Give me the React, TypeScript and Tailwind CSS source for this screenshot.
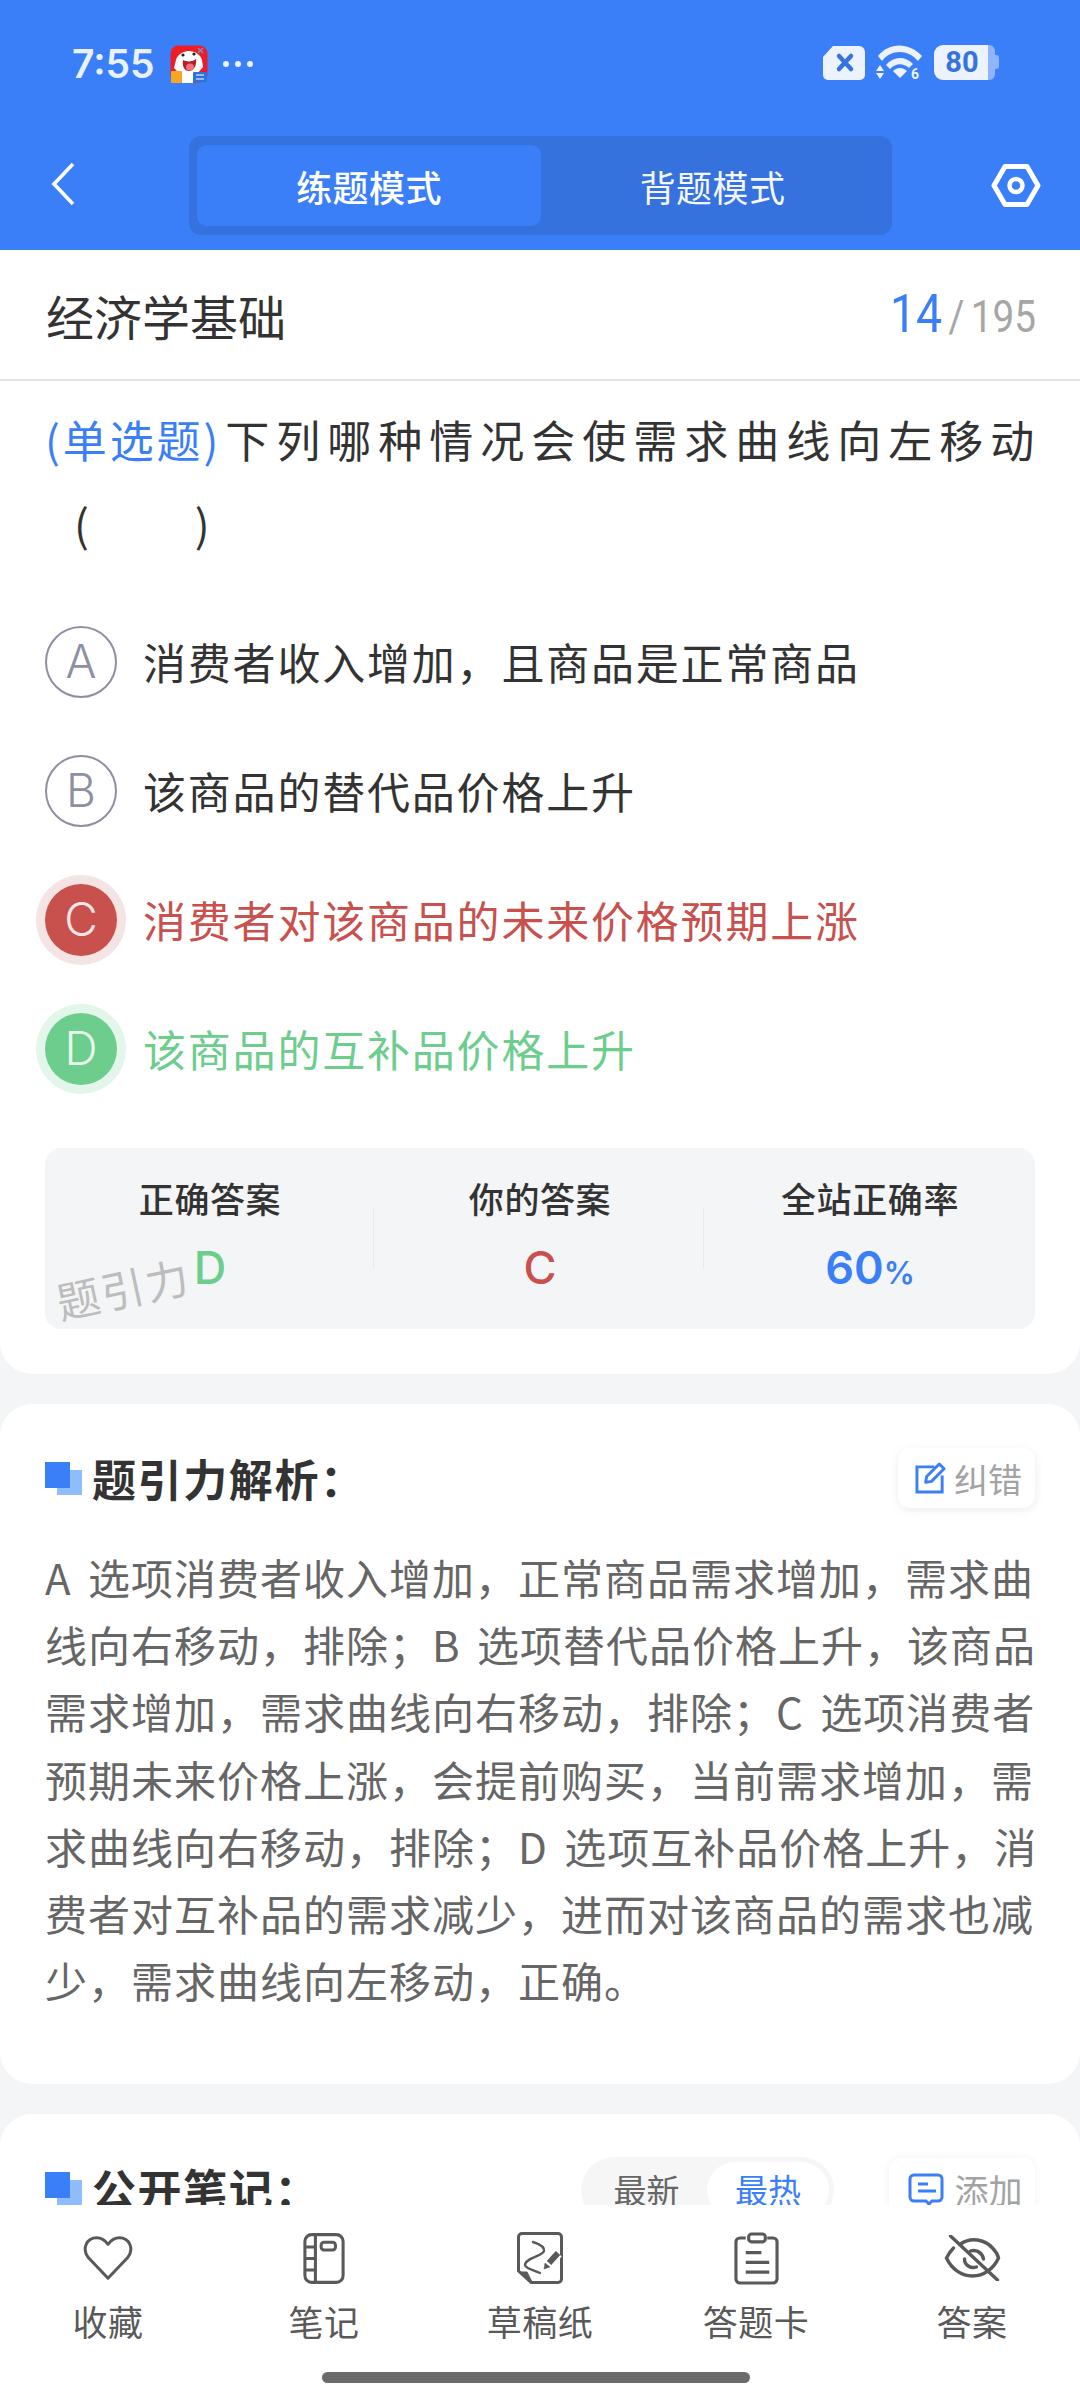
const cjk = "[font-family:'Noto_Sans_CJK_SC','Noto_Sans',sans-serif]";

function Squares() {
  return (
    <span className="relative block w-[37px] h-[33px] shrink-0">
      <span className="absolute right-0 bottom-0 w-[25px] h-[25px] bg-[#8fbcfb]" />
      <span className="absolute left-0 top-0 w-[25px] h-[26px] bg-[#3b7ff8]" />
    </span>
  );
}

function AppIcon() {
  return (
    <svg width="38" height="38" viewBox="0 0 38 38">
      <rect x="0.5" y="0.5" width="37" height="37" rx="8" fill="#ee1c25" />
      <path d="M6 15c1-5 7-9 13-9s12 4 13 9l1 7-6 7H10l-6-6z" fill="#fff" />
      <path d="M13 15c3 2 10 2 13-1 1 6-2 12-7 12s-7-5-6-11z" fill="#b3202a" />
      <ellipse cx="20" cy="22" rx="4" ry="3.5" fill="#f36f7a" />
      <circle cx="13" cy="10" r="1.6" fill="#222" />
      <circle cx="24" cy="9" r="1.6" fill="#222" />
      <path d="M28 3l5 5M33 3l-5 5" stroke="#7b90c4" strokeWidth="1.5" />
      <rect x="1" y="26" width="11" height="12" rx="1" fill="#f6a623" />
      <rect x="12" y="28" width="11" height="10" fill="#fff" />
      <rect x="23" y="27" width="14" height="10" rx="1" fill="#2d72d8" />
      <path d="M26 30h8M26 34h8" stroke="#fff" strokeWidth="1.2" />
    </svg>
  );
}

function StatusRight() {
  return (
    <div className="flex items-center gap-[10px]">
      <svg width="44" height="36" viewBox="0 0 44 36">
        <path d="M11 1h26a6 6 0 0 1 6 6v23a5 5 0 0 1-5 5H6a5 5 0 0 1-5-5V12z" fill="#edf3fe" />
        <path d="M17 11l12 13M29 11L17 24" stroke="#3573e0" strokeWidth="4.5" strokeLinecap="round" />
      </svg>
      <svg width="48" height="37" viewBox="0 0 48 37" fill="#edf3fe">
        <path d="M2 12C13 -2 33 -2 46 12l-4 5C32 5 15 5 6 17z" />
        <path d="M10 21c8-9 19-9 27-1l-4 4c-6-5-13-5-19 1z" />
        <path d="M17 27c4-4 10-4 14 0l-7 7z" />
        <path d="M4 21l4 6H0z" />
        <path d="M0 29h8l-4 6z" />
        <text x="35" y="35" fontSize="14" fontWeight="700" fontFamily="Roboto, sans-serif">6</text>
      </svg>
      <div className="relative flex h-[35px] w-[65px]">
        <div className="flex h-[35px] w-[54px] items-center justify-center rounded-l-[9px] bg-[#edf3fe]">
          <span className="pl-[2px] text-[29px] font-bold leading-[35px] text-[#3573e0] [font-family:Roboto,sans-serif]">80</span>
        </div>
        <div className="h-[35px] w-[7px] rounded-r-[6px] bg-[#8fb4fb]" />
        <div className="mt-[10px] h-[14px] w-[4px] rounded-r-[3px] bg-[#8fb4fb]" />
      </div>
    </div>
  );
}

function Heart() {
  return (
    <svg width="52" height="47" viewBox="0 0 54 50" fill="none" stroke="#595959" strokeWidth="3.2" strokeLinejoin="round">
      <path d="M27 46L6 24C-1 15 4 3 15 3c5 0 9 3 12 7 3-4 7-7 12-7 11 0 16 12 9 21z" />
    </svg>
  );
}
function Notebook() {
  return (
    <svg width="42" height="53" viewBox="0 0 44 54" fill="none" stroke="#595959" strokeWidth="3.2">
      <rect x="2" y="2" width="40" height="50" rx="7" />
      <path d="M13 2v50M2 15h11M2 27h11M2 39h11" />
      <rect x="19" y="10" width="15" height="8" rx="3" />
    </svg>
  );
}
function Draft() {
  return (
    <svg width="46" height="52" viewBox="0 0 46 52" fill="none" stroke="#595959" strokeWidth="3" strokeLinejoin="round">
      <path d="M5 1.5h36a3.5 3.5 0 0 1 3.5 3.5v42a3.5 3.5 0 0 1-3.5 3.5H14L1.5 39V5A3.5 3.5 0 0 1 5 1.5z" />
      <path d="M2 40h8l5 10z" fill="#595959" strokeWidth="1" />
      <path d="M16 10C22 12 28 15 27 19 26 24 8 26 8 33c0 3 8 5 15 8" strokeWidth="2.4" strokeLinecap="round" />
      <path d="M30 33L41 21" stroke="#ffffff" strokeWidth="10" />
      <path d="M32 31L41 21" strokeWidth="6" />
      <path d="M27 37l1-6 5 4z" fill="#595959" strokeWidth="0.5" />
    </svg>
  );
}
function Clipboard() {
  return (
    <svg width="45" height="53" viewBox="0 0 46 54" fill="none" stroke="#595959" strokeWidth="3.2" strokeLinejoin="round">
      <path d="M12 6H6a4 4 0 0 0-4 4v38a4 4 0 0 0 4 4h34a4 4 0 0 0 4-4V10a4 4 0 0 0-4-4h-6" />
      <rect x="15" y="2" width="17" height="8" rx="3" />
      <path d="M12 21h16M12 31h24M12 41h24" strokeWidth="3.4" />
    </svg>
  );
}
function EyeOff() {
  return (
    <svg width="57" height="46" viewBox="0 0 56 46" fill="none" stroke="#595959" strokeWidth="3.4" strokeLinecap="round">
      <path d="M16 9C26 2 40 4 48 13c3 3 5 6 6 10-5 11-15 18-26 18C17 41 7 34 2 23c2-4 4-7 7-10" />
      <path d="M6 1l47 44" />
      <path d="M20 24c0 6 6 10 12 8" />
      <path d="M26 16c6-2 12 2 13 8" />
    </svg>
  );
}

function Option({ letter, text, state }: { letter: string; text: string; state?: "red" | "green" }) {
  const textColor = state === "red" ? "text-[#c8514d]" : state === "green" ? "text-[#6ccd8d]" : "text-[#333333]";
  return (
    <div className="flex h-[129px] items-center gap-[26px]">
      <div className="flex w-[72px] shrink-0 justify-center">
        {state === "red" ? (
          <div className="flex h-[72px] w-[72px] shrink-0 items-center justify-center rounded-full bg-[#c8514d] text-[46px] font-light text-[#f8e6e5] shadow-[0_0_0_9px_#f5e4e4] [font-family:Inter,sans-serif]">{letter}</div>
        ) : state === "green" ? (
          <div className="flex h-[72px] w-[72px] shrink-0 items-center justify-center rounded-full bg-[#6ccd8d] text-[46px] font-light text-[#e6f7ec] shadow-[0_0_0_9px_#e2f6ea] [font-family:Inter,sans-serif]">{letter}</div>
        ) : (
          <div className="flex h-[72px] w-[72px] shrink-0 items-center justify-center rounded-full border-2 border-[#8d90a3] text-[46px] font-light text-[#8d90a3] [font-family:Inter,sans-serif]">{letter}</div>
        )}
      </div>
      <span className={`text-[43px] leading-none tracking-[1.8px] ${textColor}`}>{text}</span>
    </div>
  );
}

function Stat({ label, children }: { label: string; children: React.ReactNode }) {
  return (
    <div className="flex flex-col items-center pt-[30px]">
      <span className="text-[35px] font-medium leading-[40px] tracking-[0.6px] text-[#333333]">{label}</span>
      {children}
    </div>
  );
}

function NavItem({ icon, label }: { icon: React.ReactNode; label: string }) {
  return (
    <div className="flex flex-col items-center">
      <div className="flex h-[56px] items-center justify-center">{icon}</div>
      <span className="mt-[14px] text-[35px] leading-[42px] tracking-[0.5px] text-[#595959]">{label}</span>
    </div>
  );
}

const analysis = [
  "A 选项消费者收入增加，正常商品需求增加，需求曲",
  "线向右移动，排除；B 选项替代品价格上升，该商品",
  "需求增加，需求曲线向右移动，排除；C 选项消费者",
  "预期未来价格上涨，会提前购买，当前需求增加，需",
  "求曲线向右移动，排除；D 选项互补品价格上升，消",
  "费者对互补品的需求减少，进而对该商品的需求也减",
  "少，需求曲线向左移动，正确。",
];

export default function App() {
  return (
    <div className={`flex h-[2400px] w-[1080px] flex-col overflow-hidden bg-[#f4f5f7] ${cjk}`}>
      {/* Header */}
      <header className="h-[250px] shrink-0 bg-[#3b7ff8]">
        <div className="flex h-[136px] items-start justify-between pl-[72px] pr-[81px] pt-[44px]">
          <div className="flex items-center">
            <span className="text-[39px] font-semibold leading-[40px] text-[#e9f1fe] [font-family:Inter,sans-serif]">7:55</span>
            <span className="ml-[15px] block h-[38px] w-[38px]"><AppIcon /></span>
            <span className="ml-[15px] flex gap-[6px]">
              <i className="block h-[6px] w-[6px] rounded-full bg-[#e9f1fe]" />
              <i className="block h-[6px] w-[6px] rounded-full bg-[#e9f1fe]" />
              <i className="block h-[6px] w-[6px] rounded-full bg-[#e9f1fe]" />
            </span>
          </div>
          <StatusRight />
        </div>
        <div className="flex items-start pl-[50px] pr-[22px]">
          <svg className="mt-[26px] shrink-0" width="26" height="44" viewBox="0 0 26 44" fill="none" stroke="#ffffff" strokeWidth="3.6">
            <path d="M23 2L4 22l19 20" />
          </svg>
          <div className="ml-[113px] flex h-[99px] w-[703px] shrink-0 items-center rounded-[12px] bg-[#3672dd] px-[8px]">
            <div className="flex h-[81px] w-[344px] items-center justify-center rounded-[10px] bg-[#3b7ff8] text-[36px] font-medium tracking-[0.4px] text-white">练题模式</div>
            <div className="flex h-[81px] flex-1 items-center justify-center text-[36px] tracking-[0.4px] text-[#f4f7fe]">背题模式</div>
          </div>
          <svg className="ml-[99px] mt-[27px] shrink-0" width="50" height="45" viewBox="0 0 50 44" fill="none" stroke="#ffffff" strokeWidth="5" strokeLinejoin="round">
            <path d="M14 3h22l11 19-11 19H14L3 22z" />
            <circle cx="25" cy="22" r="6.5" strokeWidth="4.5" />
          </svg>
        </div>
      </header>

      <main className="flex min-h-0 flex-1 flex-col gap-[30px] overflow-hidden">
        {/* Question card */}
        <section className="shrink-0 rounded-b-[32px] bg-white pb-[45px]">
          <div className="flex h-[131px] items-center justify-between border-b-[2px] border-[#e3e4e6] pl-[46px] pr-[44px]">
            <span className="text-[48px] leading-none text-[#333333]">经济学基础</span>
            <span className="flex origin-right scale-x-[0.88] items-baseline text-[44px] text-[#a6a6a6] [font-family:Roboto,sans-serif]">
              <span className="text-[53px] text-[#3b7ff8]">14</span>
              <span className="mx-[7px]">/</span>
              <span>195</span>
            </span>
          </div>
          <div className="px-[45px] pt-[16px]">
            <p className="whitespace-nowrap text-[44px] leading-[84px] tracking-[7px] text-[#333333]">
              <span className="mr-[4px] tracking-[2.9px] text-[#3b7ff8]">(单选题)</span>下列哪种情况会使需求曲线向左移动
            </p>
            <p className="whitespace-pre pl-[29px] text-[44px] leading-[84px] tracking-[6px] text-[#333333]">(　　)</p>
            <div className="mt-[32px]">
              <Option letter="A" text="消费者收入增加，且商品是正常商品" />
              <Option letter="B" text="该商品的替代品价格上升" />
              <Option letter="C" text="消费者对该商品的未来价格预期上涨" state="red" />
              <Option letter="D" text="该商品的互补品价格上升" state="green" />
            </div>
            <div className="relative mt-[35px] grid h-[181px] grid-cols-3 rounded-[16px] bg-[#f4f5f7]">
              <Stat label="正确答案">
                <span className="mt-[22px] text-[45px] font-medium leading-[56px] text-[#6ccd8d] [font-family:Inter,sans-serif]">D</span>
              </Stat>
              <Stat label="你的答案">
                <span className="mt-[22px] text-[45px] font-medium leading-[56px] text-[#c8514d] [font-family:Inter,sans-serif]">C</span>
              </Stat>
              <Stat label="全站正确率">
                <span className="mt-[22px] text-[45px] font-semibold leading-[56px] text-[#3b7ff8] [font-family:Inter,sans-serif]">60<span className="text-[31px]">%</span></span>
              </Stat>
              <span className="absolute left-[328px] top-[60px] h-[60px] w-[1px] bg-[#e8e9eb]" />
              <span className="absolute left-[658px] top-[60px] h-[60px] w-[1px] bg-[#e8e9eb]" />
              <span className="absolute left-[12px] top-[132px] origin-left -rotate-[12deg] text-[43px] leading-none tracking-[2px] text-[#bdbdbd]">题引力</span>
            </div>
          </div>
        </section>

        {/* Analysis card */}
        <section className="h-[680px] shrink-0 rounded-[32px] bg-white px-[45px] pt-[44px]">
          <div className="flex h-[60px] items-center justify-between">
            <div className="flex items-center gap-[10px]">
              <Squares />
              <span className="text-[44px] font-semibold leading-none tracking-[1.6px] text-[#333333]">题引力解析：</span>
            </div>
            <div className="flex h-[60px] w-[137px] items-center justify-center gap-[7px] rounded-[12px] bg-white pl-[4px] text-[34px] text-[#a3a3a3] shadow-[0_2px_10px_rgba(0,0,0,0.08)]">
              <svg width="32" height="32" viewBox="0 0 33 33" fill="none" stroke="#3b7ff8" strokeWidth="3">
                <path d="M20 5H2v26h26V14" />
                <path d="M12 15L25 2l5 5-13 13-6 1z" strokeLinejoin="round" />
              </svg>
              <span>纠错</span>
            </div>
          </div>
          <div className="mt-[35px] text-[42px] leading-[67.2px] tracking-[1px] text-[#666666] [word-spacing:6px]">
            {analysis.map((l) => (
              <div key={l} className="whitespace-nowrap">{l}</div>
            ))}
          </div>
        </section>

        {/* Notes card */}
        <section className="min-h-0 flex-1 rounded-t-[32px] bg-white px-[45px] pt-[44px]">
          <div className="flex h-[60px] items-center">
            <Squares />
            <span className="ml-[10px] text-[44px] font-semibold leading-none tracking-[1.6px] text-[#333333]">公开笔记：</span>
            <div className="ml-auto mt-[4px] flex h-[66px] w-[253px] shrink-0 items-center rounded-full bg-[#f6f6f7] p-[5px] text-[33px]">
              <span className="flex-1 text-center text-[#666666]">最新</span>
              <span className="flex h-[56px] w-[122px] items-center justify-center rounded-full bg-white text-[#3b7ff8]">最热</span>
            </div>
            <div className="ml-[55px] mt-[2px] flex h-[62px] w-[146px] shrink-0 items-center justify-center gap-[11px] rounded-[12px] bg-white pl-[6px] text-[34px] text-[#a3a3a3] shadow-[0_0_8px_rgba(0,0,0,0.06)]">
              <svg width="36" height="32" viewBox="0 0 36 32" fill="none" stroke="#3b7ff8" strokeWidth="3">
                <path d="M6 2h24a4 4 0 0 1 4 4v18a4 4 0 0 1-4 4h-6l-3 3-3-3H6a4 4 0 0 1-4-4V6a4 4 0 0 1 4-4z" />
                <path d="M10 11h10M10 18h18" />
              </svg>
              <span>添加</span>
            </div>
          </div>
        </section>
      </main>

      {/* Bottom nav */}
      <nav className="relative h-[195px] shrink-0 bg-white">
        <div className="grid grid-cols-5 pt-[25px]">
          <NavItem icon={<Heart />} label="收藏" />
          <NavItem icon={<Notebook />} label="笔记" />
          <NavItem icon={<Draft />} label="草稿纸" />
          <NavItem icon={<Clipboard />} label="答题卡" />
          <NavItem icon={<EyeOff />} label="答案" />
        </div>
        <div className="ml-[322px] mt-[30px] h-[11px] w-[428px] rounded-full bg-[#6b6b6b]" />
      </nav>
    </div>
  );
}
